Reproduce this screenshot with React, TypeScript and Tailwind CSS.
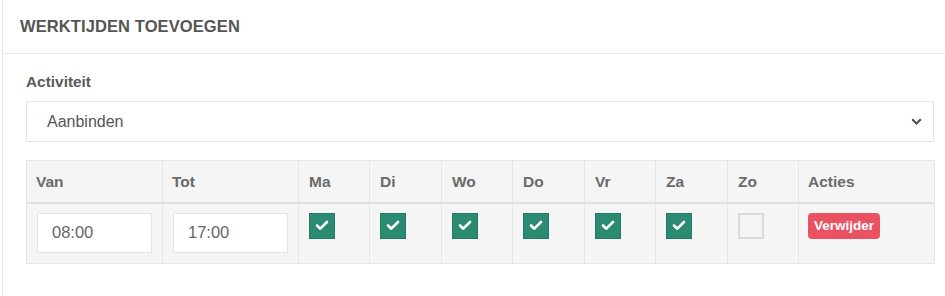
import React from 'react'

const days = [
    {label: 'Ma', checked: true},
    {label: 'Di', checked: true},
    {label: 'Wo', checked: true},
    {label: 'Do', checked: true},
    {label: 'Vr', checked: true},
    {label: 'Za', checked: true},
    {label: 'Zo', checked: false},
]

const Check = ({checked}: { checked: boolean }) => {
    if (!checked) {
        return <span className="block w-[26px] h-[26px] border-2 border-[#dedbd6] bg-[#f4f4f4]"/>
    }
    return (
        <span className="flex items-center justify-center w-[26px] h-[26px] bg-[#2a8b72] border border-[#247a63]">
            <svg width="14" height="11" viewBox="0 0 14 11" fill="none">
                <path d="M2 5.5l3.3 3.2L12 2" stroke="white" strokeWidth="2.6" strokeLinecap="round" strokeLinejoin="round"/>
            </svg>
        </span>
    )
}

const App = () => {
    return (
        <div className="w-[945px] h-[296px] bg-white font-['Liberation_Sans',Arial,sans-serif] overflow-hidden">
            <div className="ml-[2px] h-full border-l border-[#e8e8e8]">
                <div className="h-[54px] border-b border-[#e8ecec] flex items-center pl-[17px]">
                    <h2 className="text-[16.5px] font-bold text-[#555] tracking-[0.1px]">WERKTIJDEN TOEVOEGEN</h2>
                </div>

                <div className="pl-[23px] pr-[10px] pt-[19px]">
                    <label className="block text-[15.4px] font-bold text-[#5a5a5a] leading-[18px]">Activiteit</label>
                    <div className="mt-[10px] h-[41px] w-[908px] border border-[#e4e4e4] flex items-center justify-between pl-[20px] pr-[11px]">
                        <span className="text-[16px] text-[#555]">Aanbinden</span>
                        <svg width="11" height="7" viewBox="0 0 11 7" fill="none">
                            <path d="M1.2 1.2L5.5 5.5l4.3-4.3" stroke="#4a4a4a" strokeWidth="2"/>
                        </svg>
                    </div>

                    <table className="mt-[18px] w-[908px] table-fixed border-collapse bg-[#f5f5f5] text-[#6a6a6a]">
                        <colgroup>
                            <col className="w-[136px]"/>
                            <col className="w-[136px]"/>
                            <col className="w-[71px]"/>
                            <col className="w-[72px]"/>
                            <col className="w-[71px]"/>
                            <col className="w-[72px]"/>
                            <col className="w-[71px]"/>
                            <col className="w-[72px]"/>
                            <col className="w-[71px]"/>
                            <col className="w-[136px]"/>
                        </colgroup>
                        <thead>
                        <tr className="h-[42px]">
                            <th className="border border-[#e6e6e6] border-b-2 border-b-[#e0e0e0] text-left pl-[9px] text-[15.5px] font-bold">Van</th>
                            <th className="border border-[#e6e6e6] border-b-2 border-b-[#e0e0e0] text-left pl-[9px] text-[15.5px] font-bold">Tot</th>
                            {days.map(d => (
                                <th key={d.label} className="border border-[#e6e6e6] border-b-2 border-b-[#e0e0e0] text-left pl-[10px] text-[15.5px] font-bold">{d.label}</th>
                            ))}
                            <th className="border border-[#e6e6e6] border-b-2 border-b-[#e0e0e0] text-left pl-[9px] text-[15.5px] font-bold">Acties</th>
                        </tr>
                        </thead>
                        <tbody>
                        <tr className="h-[61px]">
                            <td className="border border-[#e6e6e6] align-top pt-[9px] px-[10px]">
                                <div className="h-[40px] bg-white border border-[#e4e4e4] flex items-center pl-[14px] text-[16.5px] text-[#666]">08:00</div>
                            </td>
                            <td className="border border-[#e6e6e6] align-top pt-[9px] px-[10px]">
                                <div className="h-[40px] bg-white border border-[#e4e4e4] flex items-center pl-[14px] text-[16.5px] text-[#666]">17:00</div>
                            </td>
                            {days.map(d => (
                                <td key={d.label} className="border border-[#e6e6e6] align-top pt-[9px] pl-[10px]">
                                    <Check checked={d.checked}/>
                                </td>
                            ))}
                            <td className="border border-[#e6e6e6] align-top pt-[9px] pl-[9px]">
                                <span className="inline-flex items-center h-[26px] px-[6px] rounded-[4px] bg-[#ea5262] text-white text-[13.5px] font-bold">Verwijder</span>
                            </td>
                        </tr>
                        </tbody>
                    </table>
                </div>
            </div>
        </div>
    )
}

export default App
